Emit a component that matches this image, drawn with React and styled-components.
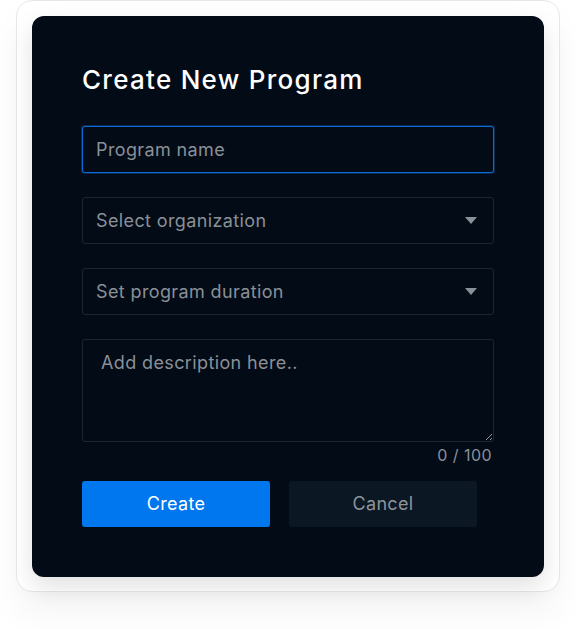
import React from "react";
import styled, { createGlobalStyle } from "styled-components";

const Global = createGlobalStyle`
  html, body { margin: 0; padding: 0; background: #ffffff; }
  body { font-family: Inter, "Noto Sans", sans-serif; }
  * { box-sizing: border-box; }
`;

const Page = styled.div`
  width: 576px;
  height: 629px;
  padding: 0 16px;
  background: #ffffff;
`;

const Frame = styled.div`
  width: 544px;
  border: 1px solid #e6e7e9;
  border-radius: 16px;
  padding: 15px 15px 14px;
  background: #ffffff;
  box-shadow: 0 22px 34px rgba(0, 0, 0, 0.045);
`;

const Card = styled.div`
  background: #020b16;
  border-radius: 12px;
  padding: 48px 50px 50px;
  display: flex;
  flex-direction: column;
  box-shadow: 0 10px 24px rgba(0, 0, 0, 0.12);
`;

const Title = styled.h1`
  margin: 0 0 31px;
  font-size: 26px;
  font-weight: 500;
  color: #ffffff;
  line-height: normal;
  letter-spacing: 1.28px;
`;

const Fields = styled.div`
  display: flex;
  flex-direction: column;
  gap: 24px;
`;

const fieldBase = `
  width: 100%;
  height: 47px;
  background: #020b16;
  border: 1px solid #1d2532;
  border-radius: 3px;
  font-family: Inter, "Noto Sans", sans-serif;
  font-size: 18px;
  letter-spacing: 0.38px;
  color: #e6e8eb;
  outline: none;
  padding: 0 13px;
`;

const TextInput = styled.input`
  ${fieldBase}
  border-color: ${(p) => (p.$focused ? "#0b6ad6" : "#1d2532")};
  box-shadow: ${(p) => (p.$focused ? "0 0 0 1px #0a2d55" : "none")};
  &::placeholder { color: #8a9098; }
`;

const SelectBox = styled.div`
  ${fieldBase}
  display: flex;
  align-items: center;
  justify-content: space-between;
  padding: 0 16px 0 13px;
  color: #8a9098;
`;

const Caret = styled.span`
  width: 0;
  height: 0;
  border-left: 6px solid transparent;
  border-right: 6px solid transparent;
  border-top: 7px solid #8a9098;
`;

const TextArea = styled.textarea`
  ${fieldBase}
  height: 103px;
  padding: 12px 18px;
  resize: vertical;
  color-scheme: dark;
  display: block;
  &::placeholder { color: #8a9098; }
`;

const Counter = styled.div`
  margin-top: 3px;
  text-align: right;
  padding-right: 2px;
  font-size: 16px;
  letter-spacing: 0.45px;
  color: #8a9098;
  line-height: normal;
`;

const Actions = styled.div`
  margin-top: 16px;
  display: flex;
  gap: 19px;
`;

const Button = styled.button`
  width: 188px;
  height: 46px;
  border: none;
  border-radius: 3px;
  font-family: Inter, "Noto Sans", sans-serif;
  font-size: 18px;
  letter-spacing: 0.35px;
  cursor: pointer;
  padding: 0 0 2px;
  background: ${(p) => (p.$primary ? "#0077ee" : "#0b1723")};
  color: ${(p) => (p.$primary ? "#ffffff" : "#8d949c")};
`;

export default function App() {
  return (
    <Page>
      <Global />
      <Frame>
        <Card>
          <Title>Create New Program</Title>
          <Fields>
            <TextInput $focused placeholder="Program name" />
            <SelectBox>
              <span>Select organization</span>
              <Caret />
            </SelectBox>
            <SelectBox>
              <span>Set program duration</span>
              <Caret />
            </SelectBox>
            <div>
              <TextArea placeholder="Add description here.." />
              <Counter>0 / 100</Counter>
            </div>
          </Fields>
          <Actions>
            <Button $primary>Create</Button>
            <Button>Cancel</Button>
          </Actions>
        </Card>
      </Frame>
    </Page>
  );
}
